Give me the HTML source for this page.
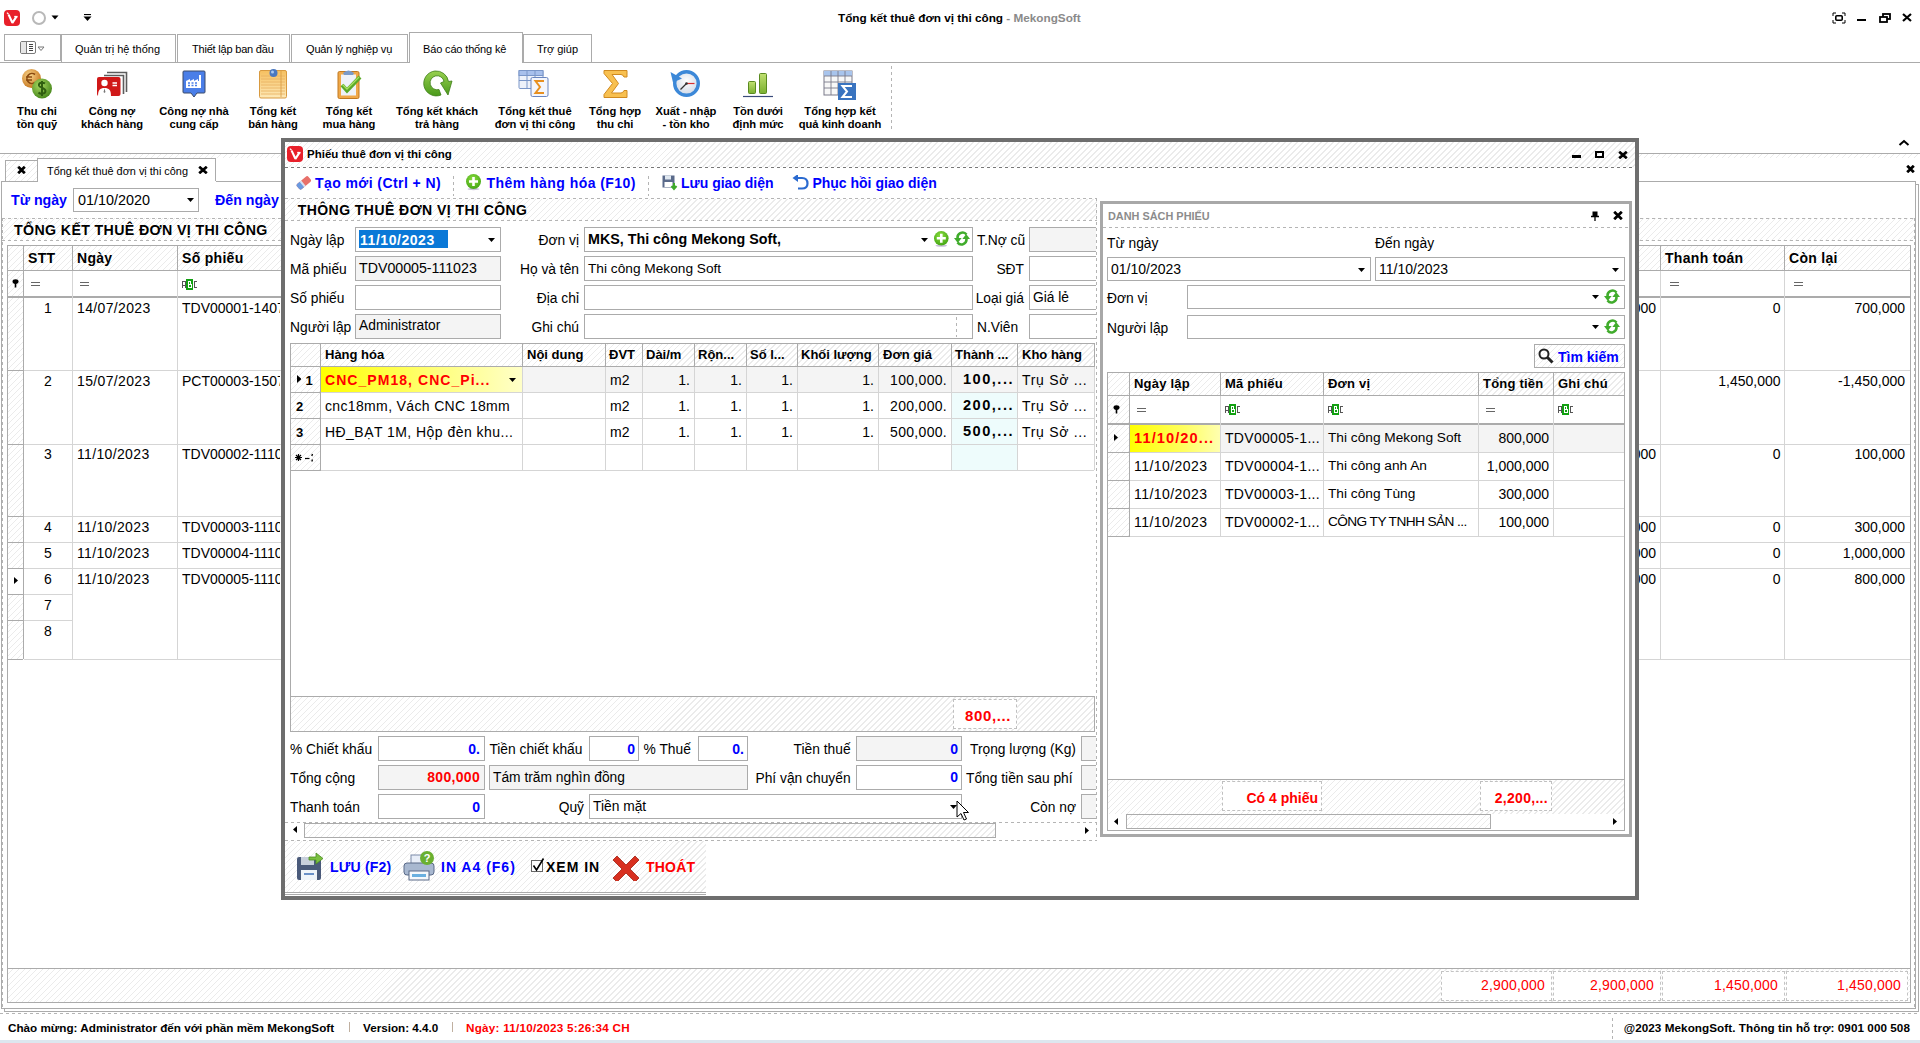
<!DOCTYPE html>
<html><head><meta charset="utf-8">
<style>
*{box-sizing:border-box;margin:0;padding:0}
html,body{width:1920px;height:1043px;overflow:hidden;background:#fff;font-family:"Liberation Sans",sans-serif;color:#000}
.a{position:absolute}
.t{position:absolute;white-space:nowrap;line-height:1}
.b{font-weight:bold}
.hatch{background-color:#fff;background-image:repeating-linear-gradient(135deg,#fff 0,#fff 3px,#ebebeb 3px,#ebebeb 4.24px)}
.bd{border:1px solid #ababab}
.blue{color:#0000ff}
.red{color:#f00}
.hl{position:absolute;height:1px;background:#ababab}
.vl{position:absolute;width:1px;background:#ababab}
.dh{position:absolute;height:1px;background-image:repeating-linear-gradient(90deg,#b4b4b4 0,#b4b4b4 3px,transparent 3px,transparent 6px)}
.dv{position:absolute;width:1px;background-image:repeating-linear-gradient(180deg,#b4b4b4 0,#b4b4b4 3px,transparent 3px,transparent 6px)}
.f13{font-size:13.5px}
.dk{background-image:repeating-linear-gradient(90deg,#787878 0,#787878 3px,transparent 3px,transparent 6px)}
.rib{position:absolute;top:0;text-align:center;font-weight:bold;font-size:11.2px;line-height:13px}
</style></head><body>
<!-- TITLE BAR -->
<div class="a" style="left:4px;top:10px;width:16px;height:16px;background:#e8202a;border-radius:4px"></div>
<svg class="a" style="left:4px;top:10px" width="16" height="16"><path d="M3 2.6 L4.6 4.4" stroke="#fff" stroke-width="1.3" fill="none"/><path d="M4.6 4.6 L8.4 12.8 L12.6 6.4" stroke="#fff" stroke-width="2.1" fill="none" stroke-linejoin="bevel"/><path d="M10.2 6.6 H13.6" stroke="#fff" stroke-width="1.4"/></svg>
<div class="a" style="left:32px;top:11px;width:14px;height:14px;border:2px solid #b8b8b8;border-radius:50%"></div>
<svg class="a" style="left:51px;top:15px" width="9" height="6"><path d="M0.5 0.5 H7.5 L4 4.5Z" fill="#000"/></svg>
<svg class="a" style="left:83px;top:14px" width="9" height="8"><path d="M1 0.5 H8" stroke="#000" stroke-width="1.2"/><path d="M0.5 2.5 H8.5 L4.5 7Z" fill="#000"/></svg>
<div class="t b" style="left:838px;top:12px;font-size:11.75px">Tổng kết thuê đơn vị thi công<span style="color:#8a8a8a"> - MekongSoft</span></div>
<svg class="a" style="left:1832px;top:12px" width="14" height="12"><path d="M1 4 V1 H4 M10 1 H13 V4 M13 8 V11 H10 M4 11 H1 V8" stroke="#000" stroke-width="1" fill="none"/><rect x="3.8" y="3.8" width="6.4" height="4.4" rx="1" stroke="#000" stroke-width="1.6" fill="none"/></svg>
<div class="a" style="left:1857px;top:19px;width:9px;height:2px;background:#000"></div>
<svg class="a" style="left:1879px;top:13px" width="12" height="10"><rect x="4" y="1" width="7" height="5" stroke="#000" stroke-width="1.8" fill="#fff"/><rect x="1" y="4" width="7" height="5" stroke="#000" stroke-width="1.8" fill="#fff"/></svg>
<svg class="a" style="left:1902px;top:13px" width="10" height="9"><path d="M1 1 L9 8 M9 1 L1 8" stroke="#000" stroke-width="2.2"/></svg>
<!-- RIBBON TABS -->
<div class="hl" style="left:0;top:62px;width:1920px"></div>
<div class="a" style="left:4px;top:34px;width:57px;height:27px;border:1px solid #ababab;background:#fff"></div>
<svg class="a" style="left:20px;top:41px" width="26" height="14"><rect x="0.5" y="0.5" width="15" height="12" rx="1.5" stroke="#7a7a7a" fill="#fff"/><rect x="1" y="1" width="5" height="11" fill="#e6e6e6"/><path d="M6.5 0.5 V12.5" stroke="#7a7a7a"/><path d="M9 3.5 H13 M9 5.5 H13 M9 7.5 H13 M9 9.5 H13" stroke="#444"/><path d="M18 6 H24 L21 9.5Z" stroke="#777" fill="#fff"/></svg>
<div class="a" style="left:61px;top:34px;width:115px;height:28px;border:1px solid #ababab;border-bottom:none"></div>
<div class="t" style="left:75px;top:44px;font-size:11px">Quản trị hệ thống</div>
<div class="a" style="left:177px;top:34px;width:113px;height:28px;border:1px solid #ababab;border-bottom:none"></div>
<div class="t" style="left:192px;top:44px;font-size:11px;letter-spacing:-0.2px">Thiết lập ban đầu</div>
<div class="a" style="left:291px;top:34px;width:117px;height:28px;border:1px solid #ababab;border-bottom:none"></div>
<div class="t" style="left:306px;top:44px;font-size:11px;letter-spacing:-0.15px">Quản lý nghiệp vụ</div>
<div class="a" style="left:409px;top:32px;width:114px;height:31px;border:1px solid #ababab;border-bottom:none;background:#fff"></div>
<div class="t" style="left:423px;top:44px;font-size:11px;letter-spacing:-0.15px">Báo cáo thống kê</div>
<div class="a" style="left:523px;top:34px;width:69px;height:28px;border:1px solid #ababab;border-bottom:none"></div>
<div class="t" style="left:537px;top:44px;font-size:11px">Trợ giúp</div>
<!-- RIBBON CONTENT -->
<div class="dv" style="left:891px;top:66px;height:66px"></div>
<svg class="a" style="left:1898px;top:139px" width="12" height="8"><path d="M1.5 6 L6 2 L10.5 6" stroke="#000" stroke-width="2" fill="none"/></svg>
<!-- icons -->
<svg class="a" style="left:20px;top:67px" width="34" height="33">
 <defs><radialGradient id="gc1" cx="40%" cy="35%" r="65%"><stop offset="0" stop-color="#f9d58c"/><stop offset="1" stop-color="#c87a22"/></radialGradient>
 <radialGradient id="gc2" cx="40%" cy="35%" r="65%"><stop offset="0" stop-color="#a8d860"/><stop offset="1" stop-color="#4a8a1e"/></radialGradient></defs>
 <circle cx="11.5" cy="11.5" r="9.5" fill="url(#gc1)"/>
 <path d="M15 7.5 A5 5 0 1 0 15 15.5 M6 10 H12 M6 13 H12" stroke="#8a4a10" stroke-width="1.6" fill="none"/>
 <circle cx="22" cy="21.5" r="10" fill="url(#gc2)"/>
 <path d="M25 16.5 C23 15 18.5 15.5 19 18.5 C19.5 21 25.5 20.5 25.5 24 C25.5 27 20.5 27.5 18.5 25.5 M22 14 V29" stroke="#2f5e10" stroke-width="2" fill="none"/>
</svg>
<svg class="a" style="left:96px;top:70px" width="34" height="28">
 <path d="M11 2.5 H30.5 V22 M8 5.5 H27.5 V24" stroke="#5c5c5c" stroke-width="1.6" fill="none"/>
 <rect x="1" y="7" width="23.5" height="19" rx="2" fill="#d01818"/>
 <circle cx="8.5" cy="13" r="3.2" fill="#fff"/>
 <path d="M2 26 C2 20 4 18 8.5 18 C13 18 15 20 15 26Z" fill="#fff"/>
 <path d="M8.5 18.5 L7.5 22 L8.5 23 L9.5 22Z" fill="#777"/>
 <path d="M16.5 13 H21 M16.5 15.5 H21" stroke="#fff" stroke-width="1.4"/>
</svg>
<svg class="a" style="left:182px;top:70px" width="24" height="30">
 <path d="M2 1 H22 Q23 1 23 2 V22 Q23 23 22 23 H15 L12 27 L9 23 H2 Q1 23 1 22 V2 Q1 1 2 1Z" fill="#4a7ee8" stroke="#3a4a6a" stroke-width="1"/>
 <path d="M4 18 V11 L8 9 V11 L12 9 V11 L16 9 V11 L17 11 V5 H19 V18Z" fill="#fff"/>
 <path d="M6 13 H8 M9.5 13 H11.5 M13 13 H15 M6 15.5 H8 M9.5 15.5 H11.5 M13 15.5 H15" stroke="#4a7ee8" stroke-width="1.3"/>
</svg>
<svg class="a" style="left:258px;top:68px" width="30" height="31">
 <defs><linearGradient id="gn" x1="0" y1="0" x2="0" y2="1"><stop offset="0" stop-color="#f6c060"/><stop offset="1" stop-color="#fde9b8"/></linearGradient></defs>
 <rect x="1.5" y="2.5" width="27" height="27.5" rx="1.5" fill="url(#gn)" stroke="#d89a40" stroke-width="1"/>
 <path d="M3 8 H27 M3 11 H27 M3 14 H27 M3 17 H27 M3 20 H27 M3 23 H27 M3 26 H27" stroke="#e8b060" stroke-width="0.8"/>
 <path d="M23 3 V29" stroke="#d89a40" stroke-width="0.8"/>
 <circle cx="15.5" cy="5" r="4" fill="#4a78c0"/><circle cx="14.5" cy="4" r="1.5" fill="#a8c8f0"/>
</svg>
<svg class="a" style="left:337px;top:68px" width="26" height="31">
 <rect x="1" y="3.5" width="21" height="27" rx="1.5" fill="#f0a848" stroke="#c07820"/>
 <rect x="4" y="6.5" width="15" height="21" fill="#eef2f8"/>
 <path d="M6 5 Q11.5 0 17 5 L16 7 H7Z" fill="#7a9ac8"/>
 <path d="M5 17 L10 22.5 L23 9" stroke="#5aaa28" stroke-width="4" fill="none"/>
 <path d="M5.5 16.5 L10 21 L22 9" stroke="#a8e060" stroke-width="1.3" fill="none"/>
</svg>
<svg class="a" style="left:421px;top:69px" width="33" height="30">
 <defs><linearGradient id="ga" x1="0" y1="0" x2="0" y2="1"><stop offset="0" stop-color="#98d050"/><stop offset="1" stop-color="#4a9a1a"/></linearGradient></defs>
 <path d="M14 2 A12.5 12.5 0 1 0 20 26 L18 20.5 A7 7 0 1 1 23 12.5 L19.5 14 L27 26 L31 12 L27.5 12.5 A12.5 12.5 0 0 0 14 2Z" fill="url(#ga)" stroke="#3e7e18" stroke-width="0.8"/>
</svg>
<svg class="a" style="left:518px;top:69px" width="33" height="30">
 <rect x="1" y="1.5" width="24" height="18" rx="1" fill="#eef2fa" stroke="#7a96c8"/>
 <rect x="1" y="1.5" width="24" height="5" fill="#a8c0ec" stroke="#7a96c8"/>
 <path d="M1 11.5 H25 M9 1.5 V19.5 M17 1.5 V19.5" stroke="#7a96c8"/>
 <rect x="13" y="8.5" width="17" height="19" rx="1.5" fill="#f4f6fc" stroke="#6a86c0"/>
 <path d="M26 12 H17.5 L22 18 L17.5 24 H26" stroke="#e89020" stroke-width="2" fill="none"/>
</svg>
<svg class="a" style="left:601px;top:69px" width="28" height="30">
 <path d="M3 1.5 H26 V8 H23 Q22 5.5 20 5.5 H11 L17.5 14.5 L10.5 24 H20 Q22 24 23 21.5 H26 V28.5 H3 V25.5 L11.5 14.5 L3 4.5Z" fill="#f8c050" stroke="#d08a20" stroke-width="1"/>
</svg>
<svg class="a" style="left:670px;top:69px" width="32" height="30">
 <defs><radialGradient id="gcl" cx="50%" cy="40%" r="60%"><stop offset="0" stop-color="#ffffff"/><stop offset="1" stop-color="#cfd8e6"/></radialGradient></defs>
 <circle cx="16.5" cy="14.5" r="11.8" fill="url(#gcl)" stroke="#3c88d8" stroke-width="3.4"/>
 <path d="M0.5 3 L12 9.5 L3 13.5Z" fill="#3c88d8"/>
 
 <path d="M16.5 14.5 L10.5 20.5" stroke="#333" stroke-width="1.3"/><path d="M16.5 14.5 H24.5" stroke="#d83030" stroke-width="1.2"/>
 <circle cx="16.5" cy="14.5" r="1.3" fill="#333"/>
</svg>
<svg class="a" style="left:742px;top:70px" width="32" height="28">
 <defs><linearGradient id="gbar" x1="0" y1="0" x2="0" y2="1"><stop offset="0" stop-color="#c0e070"/><stop offset="1" stop-color="#7ab030"/></linearGradient></defs>
 <rect x="6.5" y="11.5" width="7" height="12" rx="1" fill="url(#gbar)" stroke="#5a8a20"/>
 <rect x="17.5" y="3.5" width="7" height="20" rx="1" fill="url(#gbar)" stroke="#5a8a20"/>
 <path d="M1 26.5 H31" stroke="#3a4a7a" stroke-width="1.2"/>
</svg>
<svg class="a" style="left:823px;top:70px" width="34" height="31">
 <rect x="1" y="1" width="28" height="24" fill="#f8f8f8" stroke="#7a7a8a"/>
 <rect x="1" y="1" width="28" height="5" fill="#a8c4ec"/>
 <path d="M1 6 H29 M1 12 H29 M1 18 H29 M8 1 V25 M15 1 V25 M22 1 V25" stroke="#7a7a8a" stroke-width="0.9"/>
 <rect x="15" y="13" width="18" height="17" fill="#3a74c0"/>
 <path d="M29 16 H19.5 L24 21.5 L19.5 27 H29" stroke="#fff" stroke-width="2" fill="none"/>
</svg>
<!-- labels -->
<div class="rib" style="left:-3px;top:105px;width:80px">Thu chi<br>tồn quỹ</div>
<div class="rib" style="left:62px;top:105px;width:100px">Công nợ<br>khách hàng</div>
<div class="rib" style="left:144px;top:105px;width:100px">Công nợ nhà<br>cung cấp</div>
<div class="rib" style="left:223px;top:105px;width:100px">Tổng kết<br>bán hàng</div>
<div class="rib" style="left:299px;top:105px;width:100px">Tổng kết<br>mua hàng</div>
<div class="rib" style="left:377px;top:105px;width:120px">Tổng kết khách<br>trả hàng</div>
<div class="rib" style="left:475px;top:105px;width:120px">Tổng kết thuê<br>đơn vị thi công</div>
<div class="rib" style="left:565px;top:105px;width:100px">Tổng hợp<br>thu chi</div>
<div class="rib" style="left:636px;top:105px;width:100px">Xuất - nhập<br>- tồn kho</div>
<div class="rib" style="left:708px;top:105px;width:100px">Tồn dưới<br>định mức</div>
<div class="rib" style="left:780px;top:105px;width:120px">Tổng hợp kết<br>quả kinh doanh</div>

<!-- MAIN -->
<div class="a" style="left:0px;top:153px;width:1920px;height:1px;background:#ababab"></div>
<div class="a hatch" style="left:0px;top:154px;width:1920px;height:4px;"></div>
<div class="a hatch" style="left:5px;top:160px;width:33px;height:22px;border:1px solid #ababab"></div>
<svg class="a" style="left:17px;top:166px" width="9" height="8"><path d="M1.2 0.8 L7.8 7.2 M7.8 0.8 L1.2 7.2" stroke="#000" stroke-width="2.8000000000000003" stroke-linecap="butt"/></svg>
<div class="a" style="left:37px;top:158px;width:179px;height:24px;border:1px solid #ababab;border-bottom:none;background:#fff"></div>
<div class="t " style="left:47px;top:165.77px;font-size:10.9px;">Tổng kết thuê đơn vị thi công</div>
<svg class="a" style="left:198px;top:166px" width="10" height="8"><path d="M1.2 0.8 L8.8 7.2 M8.8 0.8 L1.2 7.2" stroke="#000" stroke-width="2.8000000000000003" stroke-linecap="butt"/></svg>
<svg class="a" style="left:1906px;top:165px" width="9" height="8"><path d="M1.2 0.8 L7.8 7.2 M7.8 0.8 L1.2 7.2" stroke="#000" stroke-width="2.8000000000000003" stroke-linecap="butt"/></svg>
<div class="a" style="left:4px;top:184px;width:1915px;height:828px;border:1px solid #ababab;background:#fff"></div>
<div class="a" style="left:1px;top:181px;width:1915px;height:828px;border:1px solid #ababab;background:#fff"></div>
<div class="a" style="left:38px;top:181px;width:178px;height:1px;background:#fff"></div>
<div class="t b blue" style="left:11px;top:192.78px;font-size:14.2px;">Từ ngày</div>
<div class="a" style="left:73px;top:188px;width:126px;height:24px;border:1px solid #ababab;background:#fff"></div>
<div class="t " style="left:78px;top:192.61px;font-size:14.4px;">01/10/2020</div>
<svg class="a" style="left:187px;top:198px" width="7" height="4"><path d="M0 0 H7 L3.5 4.0Z" fill="#000"/></svg>
<div class="t b blue" style="left:215px;top:192.78px;font-size:14.2px;">Đến ngày</div>
<div class="a hatch" style="left:2px;top:218px;width:1913px;height:23px"></div>
<div class="dh" style="left:2px;top:218px;width:1913px"></div>
<div class="dh" style="left:2px;top:240px;width:1913px"></div>
<div class="t b" style="left:14px;top:222.98px;font-size:14.2px;letter-spacing:0.37px">TỔNG KẾT THUÊ ĐƠN VỊ THI CÔNG</div>
<div class="dv" style="left:2px;top:218px;height:790px"></div>
<div class="dv" style="left:1914px;top:218px;height:790px"></div>
<div class="a" style="left:7px;top:245px;width:1903px;height:1px;background:#ababab"></div>
<div class="a hatch" style="left:8px;top:246px;width:1902px;height:24px"></div>
<div class="a" style="left:7px;top:270px;width:1903px;height:1px;background:#ababab"></div>
<div class="a" style="left:7px;top:296px;width:1903px;height:2px;background:#ababab"></div>
<div class="a hatch" style="left:8px;top:271px;width:15px;height:25px"></div>
<svg class="a" style="left:12px;top:279px" width="7" height="9"><ellipse cx="3.5" cy="2.6" rx="3" ry="2.4" fill="#000"/><path d="M3.5 4 V8.5" stroke="#000" stroke-width="1.6"/></svg>
<div class="a" style="left:72px;top:245px;width:1px;height:25px;background:#ababab"></div>
<div class="a" style="left:72px;top:271px;width:1px;height:388px;background:#d5d5d5"></div>
<div class="a" style="left:177px;top:245px;width:1px;height:25px;background:#ababab"></div>
<div class="a" style="left:177px;top:271px;width:1px;height:388px;background:#d5d5d5"></div>
<div class="a" style="left:1441px;top:245px;width:1px;height:25px;background:#ababab"></div>
<div class="a" style="left:1441px;top:271px;width:1px;height:388px;background:#d5d5d5"></div>
<div class="a" style="left:1553px;top:245px;width:1px;height:25px;background:#ababab"></div>
<div class="a" style="left:1553px;top:271px;width:1px;height:388px;background:#d5d5d5"></div>
<div class="a" style="left:1660px;top:245px;width:1px;height:25px;background:#ababab"></div>
<div class="a" style="left:1660px;top:271px;width:1px;height:388px;background:#d5d5d5"></div>
<div class="a" style="left:1784px;top:245px;width:1px;height:25px;background:#ababab"></div>
<div class="a" style="left:1784px;top:271px;width:1px;height:388px;background:#d5d5d5"></div>
<div class="a" style="left:23px;top:245px;width:1px;height:414px;background:#ababab"></div>
<div class="a" style="left:1910px;top:245px;width:1px;height:758px;background:#ababab"></div>
<div class="a" style="left:7px;top:245px;width:1px;height:758px;background:#ababab"></div>
<div class="t b" style="left:28px;top:251.15px;font-size:14px;letter-spacing:0.3px">STT</div>
<div class="t b" style="left:77px;top:251.15px;font-size:14px;letter-spacing:0.3px">Ngày</div>
<div class="t b" style="left:182px;top:251.15px;font-size:14px;letter-spacing:0.3px">Số phiếu</div>
<div class="t b" style="left:1665px;top:251.15px;font-size:14px;letter-spacing:0.3px">Thanh toán</div>
<div class="t b" style="left:1789px;top:251.15px;font-size:14px;letter-spacing:0.3px">Còn lại</div>
<svg class="a" style="left:31px;top:282px" width="10" height="5" shape-rendering="crispEdges"><path d="M0 0.5 H9 M0 3.5 H9" stroke="#666" stroke-width="1"/></svg>
<svg class="a" style="left:80px;top:282px" width="10" height="5" shape-rendering="crispEdges"><path d="M0 0.5 H9 M0 3.5 H9" stroke="#666" stroke-width="1"/></svg>
<svg class="a" style="left:1670px;top:282px" width="10" height="5" shape-rendering="crispEdges"><path d="M0 0.5 H9 M0 3.5 H9" stroke="#666" stroke-width="1"/></svg>
<svg class="a" style="left:1794px;top:282px" width="10" height="5" shape-rendering="crispEdges"><path d="M0 0.5 H9 M0 3.5 H9" stroke="#666" stroke-width="1"/></svg>
<svg class="a" style="left:182px;top:279px" width="16" height="11" shape-rendering="crispEdges"><path d="M0.5 9 V3.5 Q0.5 2.5 2 2.5 Q3.5 2.5 3.5 3.5 V9 M0.5 6 H3.5" stroke="#555" stroke-width="1" fill="none"/><rect x="4" y="0" width="7" height="11" rx="1" fill="#12a012"/><path d="M6 2.5 H8.5 V5.5 H6Z M6 5.5 H9 V8.5 H6Z" stroke="#fff" stroke-width="1" fill="none"/><path d="M15 2.5 H12.5 V8.5 H15" stroke="#555" stroke-width="1" fill="none"/></svg>
<div class="a" style="left:7px;top:370px;width:16px;height:1px;background:#ababab"></div>
<div class="a" style="left:24px;top:370px;width:1886px;height:1px;background:#d5d5d5"></div>
<div class="a" style="left:7px;top:444px;width:16px;height:1px;background:#ababab"></div>
<div class="a" style="left:24px;top:444px;width:1886px;height:1px;background:#d5d5d5"></div>
<div class="a" style="left:7px;top:516px;width:16px;height:1px;background:#ababab"></div>
<div class="a" style="left:24px;top:516px;width:1886px;height:1px;background:#d5d5d5"></div>
<div class="a" style="left:7px;top:542px;width:16px;height:1px;background:#ababab"></div>
<div class="a" style="left:24px;top:542px;width:1886px;height:1px;background:#d5d5d5"></div>
<div class="a" style="left:7px;top:568px;width:16px;height:1px;background:#ababab"></div>
<div class="a" style="left:24px;top:568px;width:1886px;height:1px;background:#d5d5d5"></div>
<div class="a" style="left:7px;top:659px;width:16px;height:1px;background:#ababab"></div>
<div class="a" style="left:24px;top:659px;width:1886px;height:1px;background:#d5d5d5"></div>
<div class="a" style="left:7px;top:594px;width:16px;height:1px;background:#ababab"></div>
<div class="a" style="left:7px;top:620px;width:16px;height:1px;background:#ababab"></div>
<div class="a" style="left:24px;top:594px;width:48px;height:1px;background:#d5d5d5"></div>
<div class="a" style="left:24px;top:620px;width:48px;height:1px;background:#d5d5d5"></div>
<div class="a hatch" style="left:8px;top:298px;width:15px;height:72px"></div>
<div class="a hatch" style="left:8px;top:371px;width:15px;height:73px"></div>
<div class="a hatch" style="left:8px;top:445px;width:15px;height:71px"></div>
<div class="a hatch" style="left:8px;top:517px;width:15px;height:25px"></div>
<div class="a hatch" style="left:8px;top:543px;width:15px;height:25px"></div>
<div class="a hatch" style="left:8px;top:569px;width:15px;height:25px"></div>
<div class="a hatch" style="left:8px;top:595px;width:15px;height:25px"></div>
<div class="a hatch" style="left:8px;top:621px;width:15px;height:38px"></div>
<div class="a" style="left:8px;top:569px;width:15px;height:25px;background:#fff"></div>
<svg class="a" style="left:14px;top:577px" width="4" height="7"><path d="M0 0 V7 L4.0 3.5Z" fill="#000"/></svg>
<div class="t " style="left:38.0px;top:300.95px;font-size:14px;width:20px;text-align:center;">1</div>
<div class="t " style="left:77px;top:300.95px;font-size:14px;letter-spacing:0.35px">14/07/2023</div>
<div class="t " style="left:182px;top:300.95px;font-size:14px;width:98px;overflow:hidden">TDV00001-1407</div>
<div class="t " style="left:1556px;top:300.95px;font-size:14px;width:100px;text-align:right;">700,000</div>
<div class="t " style="left:1670.5px;top:300.95px;font-size:14px;width:110px;text-align:right;">0</div>
<div class="t " style="left:1795px;top:300.95px;font-size:14px;width:110px;text-align:right;">700,000</div>
<div class="t " style="left:38.0px;top:373.85px;font-size:14px;width:20px;text-align:center;">2</div>
<div class="t " style="left:77px;top:373.85px;font-size:14px;letter-spacing:0.35px">15/07/2023</div>
<div class="t " style="left:182px;top:373.85px;font-size:14px;width:98px;overflow:hidden">PCT00003-1507</div>
<div class="t " style="left:1670.5px;top:373.85px;font-size:14px;width:110px;text-align:right;">1,450,000</div>
<div class="t " style="left:1795px;top:373.85px;font-size:14px;width:110px;text-align:right;">-1,450,000</div>
<div class="t " style="left:38.0px;top:447.15px;font-size:14px;width:20px;text-align:center;">3</div>
<div class="t " style="left:77px;top:447.15px;font-size:14px;letter-spacing:0.35px">11/10/2023</div>
<div class="t " style="left:182px;top:447.15px;font-size:14px;width:98px;overflow:hidden">TDV00002-1110</div>
<div class="t " style="left:1556px;top:447.15px;font-size:14px;width:100px;text-align:right;">100,000</div>
<div class="t " style="left:1670.5px;top:447.15px;font-size:14px;width:110px;text-align:right;">0</div>
<div class="t " style="left:1795px;top:447.15px;font-size:14px;width:110px;text-align:right;">100,000</div>
<div class="t " style="left:38.0px;top:520.15px;font-size:14px;width:20px;text-align:center;">4</div>
<div class="t " style="left:77px;top:520.15px;font-size:14px;letter-spacing:0.35px">11/10/2023</div>
<div class="t " style="left:182px;top:520.15px;font-size:14px;width:98px;overflow:hidden">TDV00003-1110</div>
<div class="t " style="left:1556px;top:520.15px;font-size:14px;width:100px;text-align:right;">300,000</div>
<div class="t " style="left:1670.5px;top:520.15px;font-size:14px;width:110px;text-align:right;">0</div>
<div class="t " style="left:1795px;top:520.15px;font-size:14px;width:110px;text-align:right;">300,000</div>
<div class="t " style="left:38.0px;top:546.15px;font-size:14px;width:20px;text-align:center;">5</div>
<div class="t " style="left:77px;top:546.15px;font-size:14px;letter-spacing:0.35px">11/10/2023</div>
<div class="t " style="left:182px;top:546.15px;font-size:14px;width:98px;overflow:hidden">TDV00004-1110</div>
<div class="t " style="left:1556px;top:546.15px;font-size:14px;width:100px;text-align:right;">1,000,000</div>
<div class="t " style="left:1670.5px;top:546.15px;font-size:14px;width:110px;text-align:right;">0</div>
<div class="t " style="left:1795px;top:546.15px;font-size:14px;width:110px;text-align:right;">1,000,000</div>
<div class="t " style="left:38.0px;top:572.15px;font-size:14px;width:20px;text-align:center;">6</div>
<div class="t " style="left:77px;top:572.15px;font-size:14px;letter-spacing:0.35px">11/10/2023</div>
<div class="t " style="left:182px;top:572.15px;font-size:14px;width:98px;overflow:hidden">TDV00005-1110</div>
<div class="t " style="left:1556px;top:572.15px;font-size:14px;width:100px;text-align:right;">800,000</div>
<div class="t " style="left:1670.5px;top:572.15px;font-size:14px;width:110px;text-align:right;">0</div>
<div class="t " style="left:1795px;top:572.15px;font-size:14px;width:110px;text-align:right;">800,000</div>
<div class="t " style="left:38.0px;top:598.15px;font-size:14px;width:20px;text-align:center;">7</div>
<div class="t " style="left:38.0px;top:624.15px;font-size:14px;width:20px;text-align:center;">8</div>
<div class="a" style="left:7px;top:968px;width:1903px;height:1px;background:#ababab"></div>
<div class="a" style="left:7px;top:1002px;width:1903px;height:1px;background:#ababab"></div>
<div class="a hatch" style="left:8px;top:969px;width:1902px;height:33px"></div>
<div class="a" style="left:1441px;top:971px;width:111px;height:30px;border:1px dashed #c4c4c4;background:#fff"></div>
<div class="t red" style="left:1435px;top:978.15px;font-size:14px;width:110px;text-align:right;letter-spacing:0.2px">2,900,000</div>
<div class="a" style="left:1553px;top:971px;width:108px;height:30px;border:1px dashed #c4c4c4;background:#fff"></div>
<div class="t red" style="left:1544px;top:978.15px;font-size:14px;width:110px;text-align:right;letter-spacing:0.2px">2,900,000</div>
<div class="a" style="left:1662px;top:971px;width:123px;height:30px;border:1px dashed #c4c4c4;background:#fff"></div>
<div class="t red" style="left:1668px;top:978.15px;font-size:14px;width:110px;text-align:right;letter-spacing:0.2px">1,450,000</div>
<div class="a" style="left:1786px;top:971px;width:122px;height:30px;border:1px dashed #c4c4c4;background:#fff"></div>
<div class="t red" style="left:1791px;top:978.15px;font-size:14px;width:110px;text-align:right;letter-spacing:0.2px">1,450,000</div>
<div class="dh" style="left:0px;top:1013px;width:1920px"></div>
<div class="t b" style="left:8px;top:1022.10px;font-size:11.7px;">Chào mừng: Administrator đến với phần mềm MekongSoft</div>
<div class="a" style="left:349px;top:1022px;width:1px;height:10px;background:#c0b0a0"></div>
<div class="t b" style="left:363px;top:1022.10px;font-size:11.7px;">Version: 4.4.0</div>
<div class="a" style="left:452px;top:1022px;width:1px;height:10px;background:#c0b0a0"></div>
<div class="t b red" style="left:466px;top:1022.10px;font-size:11.7px;letter-spacing:0.25px">Ngày: 11/10/2023 5:26:34 CH</div>
<div class="dv" style="left:1612px;top:1018px;height:22px"></div>
<div class="t b" style="left:1610px;top:1022.10px;font-size:11.7px;width:300px;text-align:right;letter-spacing:0.06px">@2023 MekongSoft. Thông tin hỗ trợ: 0901 000 508</div>
<div class="a" style="left:0px;top:1040px;width:1920px;height:3px;background:#dde7ef"></div>
<!-- DIALOG -->
<div class="a" style="left:281px;top:138px;width:1358px;height:762px;border:4px solid #6e6e6e;background:#fff"></div>
<div class="a hatch" style="left:285px;top:142px;width:1350px;height:25px"></div>
<div class="dh dk" style="left:285px;top:167px;width:1350px"></div>
<div class="a" style="left:287px;top:146px;width:16px;height:16px;background:#e8202a;border-radius:4px"></div>
<svg class="a" style="left:287px;top:146px" width="16" height="16"><path d="M3 2.6 L4.6 4.4" stroke="#fff" stroke-width="1.3" fill="none"/><path d="M4.6 4.6 L8.4 12.8 L12.6 6.4" stroke="#fff" stroke-width="2.1" fill="none" stroke-linejoin="bevel"/><path d="M10.2 6.6 H13.6" stroke="#fff" stroke-width="1.4"/></svg>
<div class="t b" style="left:307px;top:148.87px;font-size:11.5px;">Phiếu thuê đơn vị thi công</div>
<div class="a" style="left:1572px;top:155px;width:9px;height:3px;background:#000"></div>
<div class="a" style="left:1595px;top:151px;width:9px;height:7px;border:2px solid #000"></div>
<svg class="a" style="left:1618px;top:151px" width="10" height="8"><path d="M1.2 0.8 L8.8 7.2 M8.8 0.8 L1.2 7.2" stroke="#000" stroke-width="2.8000000000000003" stroke-linecap="butt"/></svg>
<svg class="a" style="left:295px;top:175px" width="17" height="15"><g transform="rotate(-40 8.5 7.5)"><rect x="1" y="4.5" width="15" height="7" rx="2" fill="#e8706a"/><rect x="1" y="4.5" width="6" height="7" rx="2" fill="#6a9ae0"/><rect x="6" y="4.5" width="2" height="7" fill="#d8e0f0"/></g></svg>
<div class="t b blue" style="left:315px;top:175.95px;font-size:14px;letter-spacing:0.42px">Tạo mới (Ctrl + N)</div>
<div class="dv" style="left:453px;top:176px;height:20px"></div>
<svg class="a" style="left:466px;top:174px" width="16.0" height="17.0"><defs><radialGradient id="gp466" cx="45%" cy="35%" r="60%"><stop offset="0" stop-color="#8ee040"/><stop offset="1" stop-color="#4aaa18"/></radialGradient></defs><ellipse cx="7.5" cy="15.0" rx="6.0" ry="1.2" fill="#c8c0d8"/><circle cx="7.5" cy="7.5" r="7.5" fill="url(#gp466)"/><path d="M7.5 3.0 V12.0 M3.0 7.5 H12.0" stroke="#fff" stroke-width="2.6"/></svg>
<div class="t b blue" style="left:486.6px;top:175.95px;font-size:14px;letter-spacing:0.45px">Thêm hàng hóa (F10)</div>
<div class="dv" style="left:648px;top:176px;height:20px"></div>
<svg class="a" style="left:662px;top:175px" width="16" height="16"><rect x="0.5" y="0.5" width="12" height="12" fill="#5a6a8a"/><rect x="3" y="0.5" width="6" height="4" fill="#e0e8f0"/><rect x="2.5" y="7" width="8" height="5" fill="#fff"/><path d="M12 8 V13 M9.5 11 L12 14 L14.5 11" stroke="#3eaa2a" stroke-width="2" fill="none"/></svg>
<div class="t b blue" style="left:681px;top:175.95px;font-size:14px;">Lưu giao diện</div>
<svg class="a" style="left:792px;top:175px" width="17" height="15"><path d="M5 3 H10 C14 3 15.5 5.5 15.5 8.5 C15.5 11.5 13.5 13.5 10 13.5 H6" stroke="#2a6ad0" stroke-width="2.2" fill="none"/><path d="M0.5 3 L6 -1 V7Z" fill="#2a6ad0"/></svg>
<div class="t b blue" style="left:812.4px;top:175.95px;font-size:14px;">Phục hồi giao diện</div>
<div class="dh" style="left:285px;top:198px;width:812px"></div>
<div class="a hatch" style="left:285px;top:199px;width:812px;height:21px"></div>
<div class="dh" style="left:285px;top:220px;width:812px"></div>
<div class="t b" style="left:297.7px;top:203.05px;font-size:14px;letter-spacing:0.45px">THÔNG THUÊ ĐƠN VỊ THI CÔNG</div>
<div class="dv" style="left:1096px;top:198px;height:642px"></div>
<div class="t " style="left:290px;top:233.82px;font-size:13.8px;">Ngày lập</div>
<div class="t " style="left:290px;top:262.82px;font-size:13.8px;">Mã phiếu</div>
<div class="t " style="left:290px;top:291.82px;font-size:13.8px;">Số phiếu</div>
<div class="t " style="left:290px;top:320.52px;font-size:13.8px;">Người lập</div>
<div class="a" style="left:355px;top:227px;width:146px;height:25px;border:1px solid #ababab;background:#fff;"></div>
<div class="a" style="left:359px;top:230px;width:89px;height:18px;background:#0a78d7"></div>
<div class="t b" style="left:360px;top:232.65px;font-size:14px;color:#fff;letter-spacing:0.55px">11/10/2023</div>
<svg class="a" style="left:488px;top:238px" width="7" height="4"><path d="M0 0 H7 L3.5 4.0Z" fill="#000"/></svg>
<div class="a" style="left:355px;top:256px;width:146px;height:25px;border:1px solid #ababab;background:#f4f4f4;"></div>
<div class="t " style="left:359px;top:261.48px;font-size:14.2px;">TDV00005-111023</div>
<div class="a" style="left:355px;top:285px;width:146px;height:25px;border:1px solid #ababab;background:#fff;"></div>
<div class="a" style="left:355px;top:314px;width:146px;height:25px;border:1px solid #ababab;background:#f4f4f4;"></div>
<div class="t " style="left:359px;top:319.32px;font-size:13.8px;">Administrator</div>
<div class="t " style="left:459px;top:233.82px;font-size:13.8px;width:120px;text-align:right;">Đơn vị</div>
<div class="t " style="left:459px;top:262.82px;font-size:13.8px;width:120px;text-align:right;">Họ và tên</div>
<div class="t " style="left:459px;top:291.82px;font-size:13.8px;width:120px;text-align:right;">Địa chỉ</div>
<div class="t " style="left:459px;top:320.52px;font-size:13.8px;width:120px;text-align:right;">Ghi chú</div>
<div class="a" style="left:584px;top:227px;width:389px;height:25px;border:1px solid #ababab;background:#fff;"></div>
<div class="t b" style="left:588px;top:232.40px;font-size:14.3px;">MKS, Thi công Mekong Soft,</div>
<svg class="a" style="left:921px;top:238px" width="7" height="4"><path d="M0 0 H7 L3.5 4.0Z" fill="#000"/></svg>
<svg class="a" style="left:934px;top:231px" width="15.6" height="16.6"><defs><radialGradient id="gp934" cx="45%" cy="35%" r="60%"><stop offset="0" stop-color="#8ee040"/><stop offset="1" stop-color="#4aaa18"/></radialGradient></defs><ellipse cx="7.3" cy="14.6" rx="5.84" ry="1.2" fill="#c8c0d8"/><circle cx="7.3" cy="7.3" r="7.3" fill="url(#gp934)"/><path d="M7.3 2.8 V11.8 M2.8 7.3 H11.8" stroke="#fff" stroke-width="2.6"/></svg>
<svg class="a" style="left:954px;top:231px" width="16" height="15"><path d="M3.8 8 A5 5 0 0 1 12.5 3.5" stroke="#40ac2c" stroke-width="2.6" fill="none"/><path d="M0 7 H7.6 L3.8 12Z" fill="#40ac2c"/><path d="M12.2 7 A5 5 0 0 1 3.5 11.5" stroke="#40ac2c" stroke-width="2.6" fill="none"/><path d="M8.4 8 H16 L12.2 3Z" fill="#40ac2c"/></svg>
<div class="a" style="left:584px;top:256px;width:389px;height:25px;border:1px solid #ababab;background:#fff;"></div>
<div class="t " style="left:588px;top:261.90px;font-size:13.7px;">Thi công Mekong Soft</div>
<div class="a" style="left:584px;top:285px;width:389px;height:25px;border:1px solid #ababab;background:#fff;"></div>
<div class="a" style="left:584px;top:314px;width:389px;height:25px;border:1px solid #ababab;background:#fff;"></div>
<div class="dv" style="left:956px;top:317px;height:20px"></div>
<div class="t " style="left:977px;top:233.82px;font-size:13.8px;">T.Nợ cũ</div>
<div class="t " style="left:964px;top:262.82px;font-size:13.8px;width:60px;text-align:right;">SĐT</div>
<div class="t " style="left:944px;top:291.82px;font-size:13.8px;width:80px;text-align:right;">Loại giá</div>
<div class="t " style="left:977px;top:320.52px;font-size:13.8px;">N.Viên</div>
<div class="a" style="left:1029px;top:227px;width:67px;height:25px;border:1px solid #ababab;background:#f4f4f4;border-right:none"></div>
<div class="a" style="left:1029px;top:256px;width:67px;height:25px;border:1px solid #ababab;background:#fff;border-right:none"></div>
<div class="a" style="left:1029px;top:285px;width:67px;height:25px;border:1px solid #ababab;background:#fff;border-right:none"></div>
<div class="t " style="left:1033px;top:290.82px;font-size:13.8px;">Giá lẻ</div>
<div class="a" style="left:1029px;top:314px;width:67px;height:25px;border:1px solid #ababab;background:#fff;border-right:none"></div>
<div class="a" style="left:290px;top:343px;width:805px;height:389px;border:1px solid #ababab;border-right:none;background:#fff"></div>
<div class="a" style="left:1094px;top:343px;width:1px;height:24px;background:#ababab"></div>
<div class="a" style="left:1094px;top:367px;width:1px;height:103px;background:#d5d5d5"></div>
<div class="a" style="left:1094px;top:696px;width:1px;height:36px;background:#ababab"></div>
<div class="a hatch" style="left:291px;top:344px;width:803px;height:22px"></div>
<div class="a" style="left:290px;top:366px;width:804px;height:1px;background:#ababab"></div>
<div class="a" style="left:321px;top:367px;width:201px;height:25px;background:linear-gradient(90deg,#ffff00 0%,#ffff80 60%,#ffffc8 100%)"></div>
<div class="a" style="left:523px;top:367px;width:571px;height:25px;background:#f4f4f4"></div>
<div class="a" style="left:952px;top:393px;width:65px;height:77px;background:#eefcfc"></div>
<div class="a" style="left:320px;top:343px;width:1px;height:23px;background:#ababab"></div>
<div class="a" style="left:320px;top:367px;width:1px;height:103px;background:#d5d5d5"></div>
<div class="a" style="left:522px;top:343px;width:1px;height:23px;background:#ababab"></div>
<div class="a" style="left:522px;top:367px;width:1px;height:103px;background:#d5d5d5"></div>
<div class="a" style="left:605px;top:343px;width:1px;height:23px;background:#ababab"></div>
<div class="a" style="left:605px;top:367px;width:1px;height:103px;background:#d5d5d5"></div>
<div class="a" style="left:642px;top:343px;width:1px;height:23px;background:#ababab"></div>
<div class="a" style="left:642px;top:367px;width:1px;height:103px;background:#d5d5d5"></div>
<div class="a" style="left:694px;top:343px;width:1px;height:23px;background:#ababab"></div>
<div class="a" style="left:694px;top:367px;width:1px;height:103px;background:#d5d5d5"></div>
<div class="a" style="left:746px;top:343px;width:1px;height:23px;background:#ababab"></div>
<div class="a" style="left:746px;top:367px;width:1px;height:103px;background:#d5d5d5"></div>
<div class="a" style="left:797px;top:343px;width:1px;height:23px;background:#ababab"></div>
<div class="a" style="left:797px;top:367px;width:1px;height:103px;background:#d5d5d5"></div>
<div class="a" style="left:878px;top:343px;width:1px;height:23px;background:#ababab"></div>
<div class="a" style="left:878px;top:367px;width:1px;height:103px;background:#d5d5d5"></div>
<div class="a" style="left:951px;top:343px;width:1px;height:23px;background:#ababab"></div>
<div class="a" style="left:951px;top:367px;width:1px;height:103px;background:#d5d5d5"></div>
<div class="a" style="left:1017px;top:343px;width:1px;height:23px;background:#ababab"></div>
<div class="a" style="left:1017px;top:367px;width:1px;height:103px;background:#d5d5d5"></div>
<div class="a" style="left:320px;top:343px;width:1px;height:127px;background:#ababab"></div>
<div class="a" style="left:290px;top:392px;width:31px;height:1px;background:#ababab"></div>
<div class="a" style="left:321px;top:392px;width:773px;height:1px;background:#d5d5d5"></div>
<div class="a" style="left:290px;top:418px;width:31px;height:1px;background:#ababab"></div>
<div class="a" style="left:321px;top:418px;width:773px;height:1px;background:#d5d5d5"></div>
<div class="a" style="left:290px;top:444px;width:31px;height:1px;background:#ababab"></div>
<div class="a" style="left:321px;top:444px;width:773px;height:1px;background:#d5d5d5"></div>
<div class="a" style="left:290px;top:470px;width:31px;height:1px;background:#ababab"></div>
<div class="a" style="left:321px;top:470px;width:773px;height:1px;background:#d5d5d5"></div>
<div class="a hatch" style="left:291px;top:367px;width:29px;height:25px"></div>
<div class="a hatch" style="left:291px;top:393px;width:29px;height:25px"></div>
<div class="a hatch" style="left:291px;top:419px;width:29px;height:25px"></div>
<div class="a hatch" style="left:291px;top:445px;width:29px;height:25px"></div>
<div class="t b" style="left:325px;top:347.50px;font-size:13px;">Hàng hóa</div>
<div class="t b" style="left:527px;top:347.50px;font-size:13px;">Nội dung</div>
<div class="t b" style="left:609px;top:347.50px;font-size:13px;">ĐVT</div>
<div class="t b" style="left:646px;top:347.50px;font-size:13px;">Dài/m</div>
<div class="t b" style="left:698px;top:347.50px;font-size:13px;">Rộn...</div>
<div class="t b" style="left:750px;top:347.50px;font-size:13px;">Số l...</div>
<div class="t b" style="left:801px;top:347.50px;font-size:13px;">Khối lượng</div>
<div class="t b" style="left:883px;top:347.50px;font-size:13px;">Đơn giá</div>
<div class="t b" style="left:955px;top:347.50px;font-size:13px;">Thành ...</div>
<div class="t b" style="left:1022px;top:347.50px;font-size:13px;">Kho hàng</div>
<svg class="a" style="left:297px;top:375px" width="4" height="8"><path d="M0 0 V8 L4.5 4.0Z" fill="#000"/></svg>
<div class="t b" style="left:305.5px;top:373.50px;font-size:13px;">1</div>
<div class="t b" style="left:296px;top:399.50px;font-size:13px;">2</div>
<div class="t b" style="left:296px;top:425.50px;font-size:13px;">3</div>
<svg class="a" style="left:294px;top:453px" width="24" height="11"><path d="M4.5 1 V8 M1 4.5 H8 M2 2 L7 7 M7 2 L2 7" stroke="#000" stroke-width="1.2"/><path d="M11 5.5 H15.5" stroke="#000" stroke-width="1.2"/><path d="M18.5 1 L17.8 3 M18.5 6.5 L17.8 8.5" stroke="#000" stroke-width="1.3"/></svg>
<div class="t b red" style="left:325px;top:372.65px;font-size:14px;letter-spacing:1.05px">CNC_PM18, CNC_Pi...</div>
<svg class="a" style="left:509px;top:378px" width="7" height="4"><path d="M0 0 H7 L3.5 4.0Z" fill="#000"/></svg>
<div class="t " style="left:325px;top:398.65px;font-size:14px;letter-spacing:0.35px">cnc18mm, Vách CNC 18mm</div>
<div class="t " style="left:325px;top:424.65px;font-size:14px;letter-spacing:0.45px">HĐ_BẠT 1M, Hộp đèn khu...</div>
<div class="t " style="left:610px;top:372.65px;font-size:14px;">m2</div>
<div class="t " style="left:650px;top:372.65px;font-size:14px;width:40px;text-align:right;">1.</div>
<div class="t " style="left:702px;top:372.65px;font-size:14px;width:40px;text-align:right;">1.</div>
<div class="t " style="left:753px;top:372.65px;font-size:14px;width:40px;text-align:right;">1.</div>
<div class="t " style="left:834px;top:372.65px;font-size:14px;width:40px;text-align:right;">1.</div>
<div class="t " style="left:867px;top:372.65px;font-size:14px;width:80px;text-align:right;letter-spacing:0.3px">100,000.</div>
<div class="t b" style="left:944px;top:372.14px;font-size:14.6px;width:70px;text-align:right;letter-spacing:1.5px">100,...</div>
<div class="t " style="left:1022px;top:372.65px;font-size:14px;letter-spacing:0.7px">Trụ Sở ...</div>
<div class="t " style="left:610px;top:398.65px;font-size:14px;">m2</div>
<div class="t " style="left:650px;top:398.65px;font-size:14px;width:40px;text-align:right;">1.</div>
<div class="t " style="left:702px;top:398.65px;font-size:14px;width:40px;text-align:right;">1.</div>
<div class="t " style="left:753px;top:398.65px;font-size:14px;width:40px;text-align:right;">1.</div>
<div class="t " style="left:834px;top:398.65px;font-size:14px;width:40px;text-align:right;">1.</div>
<div class="t " style="left:867px;top:398.65px;font-size:14px;width:80px;text-align:right;letter-spacing:0.3px">200,000.</div>
<div class="t b" style="left:944px;top:398.14px;font-size:14.6px;width:70px;text-align:right;letter-spacing:1.5px">200,...</div>
<div class="t " style="left:1022px;top:398.65px;font-size:14px;letter-spacing:0.7px">Trụ Sở ...</div>
<div class="t " style="left:610px;top:424.65px;font-size:14px;">m2</div>
<div class="t " style="left:650px;top:424.65px;font-size:14px;width:40px;text-align:right;">1.</div>
<div class="t " style="left:702px;top:424.65px;font-size:14px;width:40px;text-align:right;">1.</div>
<div class="t " style="left:753px;top:424.65px;font-size:14px;width:40px;text-align:right;">1.</div>
<div class="t " style="left:834px;top:424.65px;font-size:14px;width:40px;text-align:right;">1.</div>
<div class="t " style="left:867px;top:424.65px;font-size:14px;width:80px;text-align:right;letter-spacing:0.3px">500,000.</div>
<div class="t b" style="left:944px;top:424.14px;font-size:14.6px;width:70px;text-align:right;letter-spacing:1.5px">500,...</div>
<div class="t " style="left:1022px;top:424.65px;font-size:14px;letter-spacing:0.7px">Trụ Sở ...</div>
<div class="a" style="left:290px;top:696px;width:805px;height:1px;background:#ababab"></div>
<div class="a hatch" style="left:291px;top:697px;width:803px;height:34px"></div>
<div class="a" style="left:953px;top:699px;width:64px;height:30px;border:1px dashed #c0c0c0;background:#fff"></div>
<div class="t b red" style="left:941px;top:707.80px;font-size:15px;width:70px;text-align:right;letter-spacing:0.6px">800,...</div>
<div class="t " style="left:290px;top:742.82px;font-size:13.8px;">% Chiết khấu</div>
<div class="t " style="left:290px;top:771.62px;font-size:13.8px;">Tổng cộng</div>
<div class="t " style="left:290px;top:800.92px;font-size:13.8px;">Thanh toán</div>
<div class="a" style="left:378px;top:736px;width:107px;height:25px;border:1px solid #ababab;background:#fff;"></div>
<div class="t b blue" style="left:440px;top:741.65px;font-size:14px;width:40px;text-align:right;">0.</div>
<div class="a" style="left:378px;top:765px;width:107px;height:25px;border:1px solid #ababab;background:#f4f4f4;"></div>
<div class="t b red" style="left:390px;top:770.45px;font-size:14px;width:90px;text-align:right;letter-spacing:0.3px">800,000</div>
<div class="a" style="left:378px;top:794px;width:107px;height:25px;border:1px solid #ababab;background:#fff;"></div>
<div class="t b blue" style="left:440px;top:799.75px;font-size:14px;width:40px;text-align:right;">0</div>
<div class="t " style="left:489.4px;top:742.82px;font-size:13.8px;">Tiền chiết khấu</div>
<div class="a" style="left:589px;top:736px;width:50px;height:25px;border:1px solid #ababab;background:#fff;"></div>
<div class="t b blue" style="left:595px;top:741.65px;font-size:14px;width:40px;text-align:right;">0</div>
<div class="t " style="left:643.6px;top:742.82px;font-size:13.8px;">% Thuế</div>
<div class="a" style="left:698px;top:736px;width:50px;height:25px;border:1px solid #ababab;background:#fff;"></div>
<div class="t b blue" style="left:704px;top:741.65px;font-size:14px;width:40px;text-align:right;">0.</div>
<div class="a" style="left:489px;top:765px;width:259px;height:25px;border:1px solid #ababab;background:#f4f4f4;"></div>
<div class="t " style="left:493px;top:770.62px;font-size:13.8px;">Tám trăm nghìn đồng</div>
<div class="t " style="left:524px;top:800.92px;font-size:13.8px;width:60px;text-align:right;">Quỹ</div>
<div class="a" style="left:589px;top:794px;width:373px;height:25px;border:1px solid #ababab;background:#fff;"></div>
<div class="t " style="left:593px;top:799.92px;font-size:13.8px;">Tiền mặt</div>
<svg class="a" style="left:950px;top:805px" width="7" height="4"><path d="M0 0 H7 L3.5 4.0Z" fill="#000"/></svg>
<div class="t " style="left:750.6px;top:742.82px;font-size:13.8px;width:100px;text-align:right;">Tiền thuế</div>
<div class="a" style="left:856px;top:736px;width:106px;height:25px;border:1px solid #ababab;background:#f4f4f4;"></div>
<div class="t b blue" style="left:918px;top:741.65px;font-size:14px;width:40px;text-align:right;">0</div>
<div class="t " style="left:730.6px;top:771.62px;font-size:13.8px;width:120px;text-align:right;">Phí vận chuyển</div>
<div class="a" style="left:856px;top:765px;width:106px;height:25px;border:1px solid #ababab;background:#fff;"></div>
<div class="t b blue" style="left:918px;top:770.45px;font-size:14px;width:40px;text-align:right;">0</div>
<div class="t " style="left:970px;top:742.82px;font-size:13.8px;">Trọng lượng (Kg)</div>
<div class="t " style="left:966px;top:771.62px;font-size:13.8px;">Tổng tiền sau phí</div>
<div class="t " style="left:996px;top:800.92px;font-size:13.8px;width:80px;text-align:right;">Còn nợ</div>
<div class="a" style="left:1081px;top:736px;width:15px;height:25px;border:1px solid #ababab;background:#f4f4f4;border-right:none"></div>
<div class="a" style="left:1081px;top:765px;width:15px;height:25px;border:1px solid #ababab;background:#f4f4f4;border-right:none"></div>
<div class="a" style="left:1081px;top:794px;width:15px;height:25px;border:1px solid #ababab;background:#f4f4f4;border-right:none"></div>
<svg class="a" style="left:956px;top:800px" width="14" height="22"><path d="M1 1 V17 L5 13.5 L8 20 L10.5 19 L7.5 12.5 L12.5 12.5Z" fill="#fff" stroke="#000" stroke-width="1"/></svg>
<div class="dh" style="left:285px;top:822px;width:812px"></div>
<svg class="a" style="left:293px;top:826px" width="4" height="7"><path d="M4.0 0 V7 L0 3.5Z" fill="#000"/></svg>
<div class="a hatch" style="left:304px;top:823px;width:692px;height:15px;border:1px solid #ababab"></div>
<svg class="a" style="left:1085px;top:827px" width="4" height="7"><path d="M0 0 V7 L4.0 3.5Z" fill="#000"/></svg>
<div class="dh" style="left:285px;top:840px;width:812px"></div>
<div class="a hatch" style="left:285px;top:841px;width:421px;height:51px"></div>
<div class="a" style="left:285px;top:892px;width:421px;height:1px;background:#ababab"></div>
<div class="a" style="left:285px;top:894px;width:421px;height:1px;background:#ababab"></div>
<svg class="a" style="left:296px;top:850px" width="28" height="32"><rect x="1" y="7" width="24" height="23" rx="2" fill="#4a5a7a"/><rect x="5" y="7" width="13" height="8" fill="#c8d0dc"/><rect x="5" y="20" width="16" height="10" fill="#f0f4fa"/><rect x="8" y="23" width="10" height="2" fill="#6a90c8"/><path d="M13 7 H20 V3 L27 8.5 L20 14 V10 H13Z" fill="#7ac040" stroke="#4a8a20" stroke-width="0.8"/></svg>
<div class="t b blue" style="left:330px;top:860.15px;font-size:14px;letter-spacing:0.2px">LƯU (F2)</div>
<svg class="a" style="left:403px;top:850px" width="34" height="32"><rect x="8" y="5" width="16" height="10" fill="#e8eef8" stroke="#7a8aa8"/><rect x="1" y="13" width="30" height="12" rx="3" fill="#a8b8d0" stroke="#5a6a88"/><rect x="6" y="21" width="20" height="9" fill="#f4f8fc" stroke="#5a6a88"/><rect x="9" y="24" width="14" height="3" fill="#6ab0e0"/><circle cx="24" cy="8" r="7" fill="#6ab030"/><text x="20.8" y="12" font-size="11" font-weight="bold" font-family="Liberation Sans" fill="#fff">?</text></svg>
<div class="t b blue" style="left:441px;top:860.15px;font-size:14px;letter-spacing:1px">IN A4 (F6)</div>
<svg class="a" style="left:531px;top:858px" width="14" height="15"><rect x="0.5" y="2.5" width="11" height="11" fill="#fff" stroke="#666"/><path d="M2.5 7.5 L5.5 12 L12.5 0.5" stroke="#000" stroke-width="1.6" fill="none"/></svg>
<div class="t b" style="left:546px;top:860.15px;font-size:14px;letter-spacing:1px">XEM IN</div>
<svg class="a" style="left:612px;top:853px" width="28" height="28"><path d="M5 3 L14 12 L23 3 L27 7 L18 16 L27 25 L23 29 L14 20 L5 29 L1 25 L10 16 L1 7Z" fill="#d83020" stroke="#a02010" stroke-width="0.8"/></svg>
<div class="t b red" style="left:646px;top:860.15px;font-size:14px;letter-spacing:0.2px">THOÁT</div>
<div class="a" style="left:1100px;top:201px;width:532px;height:636px;border:3px solid #a8a8a8;background:#fff"></div>
<div class="t b" style="left:1108px;top:211.27px;font-size:10.9px;color:#8c8c8c">DANH SÁCH PHIẾU</div>
<svg class="a" style="left:1591px;top:211px" width="8" height="10"><rect x="1.5" y="0.5" width="5" height="5" fill="#000"/><path d="M0 5.5 H8 M4 5.5 V10" stroke="#000" stroke-width="1.3"/></svg>
<svg class="a" style="left:1613px;top:211px" width="10" height="9"><path d="M1.2 0.8 L8.8 8.2 M8.8 0.8 L1.2 8.2" stroke="#000" stroke-width="2.8000000000000003" stroke-linecap="butt"/></svg>
<div class="dh" style="left:1103px;top:227px;width:526px"></div>
<div class="t " style="left:1107px;top:236.62px;font-size:13.8px;">Từ ngày</div>
<div class="t " style="left:1375px;top:236.62px;font-size:13.8px;">Đến ngày</div>
<div class="a" style="left:1107px;top:257px;width:264px;height:24px;border:1px solid #ababab;background:#fff;"></div>
<div class="t " style="left:1111px;top:262.15px;font-size:14px;">01/10/2023</div>
<svg class="a" style="left:1358px;top:268px" width="7" height="4"><path d="M0 0 H7 L3.5 4.0Z" fill="#000"/></svg>
<div class="a" style="left:1375px;top:257px;width:250px;height:24px;border:1px solid #ababab;background:#fff;"></div>
<div class="t " style="left:1379px;top:262.15px;font-size:14px;">11/10/2023</div>
<svg class="a" style="left:1612px;top:268px" width="7" height="4"><path d="M0 0 H7 L3.5 4.0Z" fill="#000"/></svg>
<div class="t " style="left:1107px;top:292.32px;font-size:13.8px;">Đơn vị</div>
<div class="a" style="left:1187px;top:285px;width:438px;height:24px;border:1px solid #ababab;background:#fff;"></div>
<svg class="a" style="left:1592px;top:295px" width="7" height="4"><path d="M0 0 H7 L3.5 4.0Z" fill="#000"/></svg>
<svg class="a" style="left:1604px;top:289px" width="16" height="15"><path d="M3.8 8 A5 5 0 0 1 12.5 3.5" stroke="#40ac2c" stroke-width="2.6" fill="none"/><path d="M0 7 H7.6 L3.8 12Z" fill="#40ac2c"/><path d="M12.2 7 A5 5 0 0 1 3.5 11.5" stroke="#40ac2c" stroke-width="2.6" fill="none"/><path d="M8.4 8 H16 L12.2 3Z" fill="#40ac2c"/></svg>
<div class="t " style="left:1107px;top:322.32px;font-size:13.8px;">Người lập</div>
<div class="a" style="left:1187px;top:315px;width:438px;height:24px;border:1px solid #ababab;background:#fff;"></div>
<svg class="a" style="left:1592px;top:325px" width="7" height="4"><path d="M0 0 H7 L3.5 4.0Z" fill="#000"/></svg>
<svg class="a" style="left:1604px;top:319px" width="16" height="15"><path d="M3.8 8 A5 5 0 0 1 12.5 3.5" stroke="#40ac2c" stroke-width="2.6" fill="none"/><path d="M0 7 H7.6 L3.8 12Z" fill="#40ac2c"/><path d="M12.2 7 A5 5 0 0 1 3.5 11.5" stroke="#40ac2c" stroke-width="2.6" fill="none"/><path d="M8.4 8 H16 L12.2 3Z" fill="#40ac2c"/></svg>
<div class="a hatch" style="left:1534px;top:344px;width:91px;height:24px;border:1px solid #ababab"></div>
<svg class="a" style="left:1538px;top:348px" width="16" height="16"><circle cx="6" cy="6" r="4.5" stroke="#222" stroke-width="2" fill="none"/><path d="M9.5 9.5 L14.5 14.5" stroke="#222" stroke-width="3"/></svg>
<div class="t b blue" style="left:1558px;top:350.15px;font-size:14px;">Tìm kiếm</div>
<div class="a" style="left:1107px;top:372px;width:518px;height:459px;border:1px solid #ababab;background:#fff"></div>
<div class="a hatch" style="left:1108px;top:373px;width:516px;height:22px"></div>
<div class="a" style="left:1107px;top:395px;width:517px;height:1px;background:#ababab"></div>
<div class="a" style="left:1107px;top:423px;width:517px;height:2px;background:#ababab"></div>
<div class="a hatch" style="left:1108px;top:396px;width:21px;height:27px"></div>
<svg class="a" style="left:1113px;top:405px" width="7" height="9"><ellipse cx="3.5" cy="2.6" rx="3" ry="2.4" fill="#000"/><path d="M3.5 4 V8.5" stroke="#000" stroke-width="1.6"/></svg>
<div class="a" style="left:1130px;top:425px;width:494px;height:27px;background:#f4f4f4"></div>
<div class="a" style="left:1130px;top:425px;width:90px;height:27px;background:linear-gradient(90deg,#ffff00 0%,#ffff60 60%,#ffffb0 100%)"></div>
<div class="a" style="left:1220px;top:372px;width:1px;height:23px;background:#ababab"></div>
<div class="a" style="left:1220px;top:396px;width:1px;height:140px;background:#d5d5d5"></div>
<div class="a" style="left:1323px;top:372px;width:1px;height:23px;background:#ababab"></div>
<div class="a" style="left:1323px;top:396px;width:1px;height:140px;background:#d5d5d5"></div>
<div class="a" style="left:1478px;top:372px;width:1px;height:23px;background:#ababab"></div>
<div class="a" style="left:1478px;top:396px;width:1px;height:140px;background:#d5d5d5"></div>
<div class="a" style="left:1553px;top:372px;width:1px;height:23px;background:#ababab"></div>
<div class="a" style="left:1553px;top:396px;width:1px;height:140px;background:#d5d5d5"></div>
<div class="a" style="left:1129px;top:372px;width:1px;height:164px;background:#ababab"></div>
<div class="a" style="left:1107px;top:452px;width:23px;height:1px;background:#ababab"></div>
<div class="a" style="left:1130px;top:452px;width:494px;height:1px;background:#d5d5d5"></div>
<div class="a" style="left:1107px;top:480px;width:23px;height:1px;background:#ababab"></div>
<div class="a" style="left:1130px;top:480px;width:494px;height:1px;background:#d5d5d5"></div>
<div class="a" style="left:1107px;top:508px;width:23px;height:1px;background:#ababab"></div>
<div class="a" style="left:1130px;top:508px;width:494px;height:1px;background:#d5d5d5"></div>
<div class="a" style="left:1107px;top:536px;width:23px;height:1px;background:#ababab"></div>
<div class="a" style="left:1130px;top:536px;width:494px;height:1px;background:#d5d5d5"></div>
<div class="a hatch" style="left:1108px;top:425px;width:21px;height:27px"></div>
<div class="a hatch" style="left:1108px;top:453px;width:21px;height:27px"></div>
<div class="a hatch" style="left:1108px;top:481px;width:21px;height:27px"></div>
<div class="a hatch" style="left:1108px;top:509px;width:21px;height:27px"></div>
<svg class="a" style="left:1114px;top:434px" width="4" height="7"><path d="M0 0 V7 L4.0 3.5Z" fill="#000"/></svg>
<div class="t b" style="left:1134px;top:377.00px;font-size:13px;letter-spacing:0.2px">Ngày lập</div>
<div class="t b" style="left:1225px;top:377.00px;font-size:13px;letter-spacing:0.2px">Mã phiếu</div>
<div class="t b" style="left:1328px;top:377.00px;font-size:13px;letter-spacing:0.2px">Đơn vị</div>
<div class="t b" style="left:1483px;top:377.00px;font-size:13px;letter-spacing:0.2px">Tổng tiền</div>
<div class="t b" style="left:1558px;top:377.00px;font-size:13px;letter-spacing:0.2px">Ghi chú</div>
<svg class="a" style="left:1137px;top:408px" width="10" height="5" shape-rendering="crispEdges"><path d="M0 0.5 H9 M0 3.5 H9" stroke="#666" stroke-width="1"/></svg>
<svg class="a" style="left:1225px;top:404px" width="16" height="11" shape-rendering="crispEdges"><path d="M0.5 9 V3.5 Q0.5 2.5 2 2.5 Q3.5 2.5 3.5 3.5 V9 M0.5 6 H3.5" stroke="#555" stroke-width="1" fill="none"/><rect x="4" y="0" width="7" height="11" rx="1" fill="#12a012"/><path d="M6 2.5 H8.5 V5.5 H6Z M6 5.5 H9 V8.5 H6Z" stroke="#fff" stroke-width="1" fill="none"/><path d="M15 2.5 H12.5 V8.5 H15" stroke="#555" stroke-width="1" fill="none"/></svg>
<svg class="a" style="left:1328px;top:404px" width="16" height="11" shape-rendering="crispEdges"><path d="M0.5 9 V3.5 Q0.5 2.5 2 2.5 Q3.5 2.5 3.5 3.5 V9 M0.5 6 H3.5" stroke="#555" stroke-width="1" fill="none"/><rect x="4" y="0" width="7" height="11" rx="1" fill="#12a012"/><path d="M6 2.5 H8.5 V5.5 H6Z M6 5.5 H9 V8.5 H6Z" stroke="#fff" stroke-width="1" fill="none"/><path d="M15 2.5 H12.5 V8.5 H15" stroke="#555" stroke-width="1" fill="none"/></svg>
<svg class="a" style="left:1486px;top:408px" width="10" height="5" shape-rendering="crispEdges"><path d="M0 0.5 H9 M0 3.5 H9" stroke="#666" stroke-width="1"/></svg>
<svg class="a" style="left:1558px;top:404px" width="16" height="11" shape-rendering="crispEdges"><path d="M0.5 9 V3.5 Q0.5 2.5 2 2.5 Q3.5 2.5 3.5 3.5 V9 M0.5 6 H3.5" stroke="#555" stroke-width="1" fill="none"/><rect x="4" y="0" width="7" height="11" rx="1" fill="#12a012"/><path d="M6 2.5 H8.5 V5.5 H6Z M6 5.5 H9 V8.5 H6Z" stroke="#fff" stroke-width="1" fill="none"/><path d="M15 2.5 H12.5 V8.5 H15" stroke="#555" stroke-width="1" fill="none"/></svg>
<div class="t b red" style="left:1134px;top:430.64px;font-size:14.6px;letter-spacing:1.1px">11/10/20...</div>
<div class="t " style="left:1225px;top:431.15px;font-size:14px;letter-spacing:0.3px">TDV00005-1...</div>
<div class="t " style="left:1328px;top:431.40px;font-size:13.7px;">Thi công Mekong Soft</div>
<div class="t " style="left:1469px;top:431.15px;font-size:14px;width:80px;text-align:right;">800,000</div>
<div class="t " style="left:1134px;top:459.15px;font-size:14px;letter-spacing:0.45px">11/10/2023</div>
<div class="t " style="left:1225px;top:459.15px;font-size:14px;letter-spacing:0.3px">TDV00004-1...</div>
<div class="t " style="left:1328px;top:459.40px;font-size:13.7px;">Thi công anh An</div>
<div class="t " style="left:1469px;top:459.15px;font-size:14px;width:80px;text-align:right;">1,000,000</div>
<div class="t " style="left:1134px;top:487.15px;font-size:14px;letter-spacing:0.45px">11/10/2023</div>
<div class="t " style="left:1225px;top:487.15px;font-size:14px;letter-spacing:0.3px">TDV00003-1...</div>
<div class="t " style="left:1328px;top:487.40px;font-size:13.7px;">Thi công Tùng</div>
<div class="t " style="left:1469px;top:487.15px;font-size:14px;width:80px;text-align:right;">300,000</div>
<div class="t " style="left:1134px;top:515.15px;font-size:14px;letter-spacing:0.45px">11/10/2023</div>
<div class="t " style="left:1225px;top:515.15px;font-size:14px;letter-spacing:0.3px">TDV00002-1...</div>
<div class="t " style="left:1328px;top:515.40px;font-size:13.7px;letter-spacing:-0.6px">CÔNG TY TNHH SẢN ...</div>
<div class="t " style="left:1469px;top:515.15px;font-size:14px;width:80px;text-align:right;">100,000</div>
<div class="a" style="left:1107px;top:779px;width:517px;height:1px;background:#ababab"></div>
<div class="a hatch" style="left:1108px;top:780px;width:516px;height:34px"></div>
<div class="a" style="left:1222px;top:781px;width:100px;height:30px;border:1px dashed #c0c0c0;background:#fff"></div>
<div class="t b red" style="left:1218px;top:791.15px;font-size:14px;width:100px;text-align:right;">Có 4 phiếu</div>
<div class="a" style="left:1480px;top:781px;width:72px;height:30px;border:1px dashed #c0c0c0;background:#fff"></div>
<div class="t b red" style="left:1468px;top:791.15px;font-size:14px;width:80px;text-align:right;letter-spacing:0.3px">2,200,...</div>
<svg class="a" style="left:1114px;top:818px" width="4" height="7"><path d="M4.0 0 V7 L0 3.5Z" fill="#000"/></svg>
<div class="a hatch" style="left:1126px;top:814px;width:365px;height:15px;border:1px solid #ababab"></div>
<svg class="a" style="left:1613px;top:818px" width="4" height="7"><path d="M0 0 V7 L4.0 3.5Z" fill="#000"/></svg>
</body></html>
